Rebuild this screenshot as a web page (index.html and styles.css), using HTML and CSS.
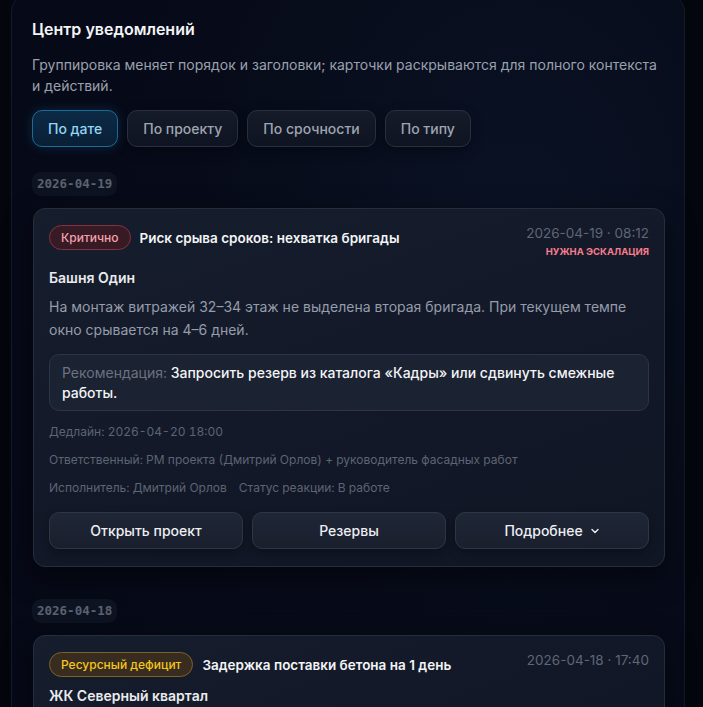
FILE: index.html
```html
<!DOCTYPE html>
<html lang="ru">
<head>
<meta charset="utf-8">
<title>Центр уведомлений</title>
<link rel="stylesheet" href="styles.css">
</head>
<body>
<section class="panel">
  <h1 class="title">Центр уведомлений</h1>
  <p class="subtitle">Группировка меняет порядок и заголовки; карточки раскрываются для полного контекста и действий.</p>
  <div class="filters">
    <button class="filter active">По дате</button>
    <button class="filter">По проекту</button>
    <button class="filter">По срочности</button>
    <button class="filter">По типу</button>
  </div>

  <div class="group">
    <span class="date-chip">2026-04-19</span>
    <article class="card">
      <header class="card-head">
        <div class="head-left">
          <span class="badge badge-critical">Критично</span>
          <span class="card-title">Риск срыва сроков: нехватка бригады</span>
        </div>
        <div class="head-right">
          <span class="time">2026-04-19 · 08:12</span>
          <span class="escalate">Нужна эскалация</span>
        </div>
      </header>
      <div class="project">Башня Один</div>
      <p class="desc">На монтаж витражей 32–34 этаж не выделена вторая бригада. При текущем темпе окно срывается на 4–6 дней.</p>
      <p class="reco"><span class="reco-label">Рекомендация:</span> Запросить резерв из каталога «Кадры» или сдвинуть смежные работы.</p>
      <div class="meta">Дедлайн: 2026-04-20 18:00</div>
      <div class="meta">Ответственный: PM проекта (Дмитрий Орлов) + руководитель фасадных работ</div>
      <div class="meta meta-row"><span>Исполнитель: Дмитрий Орлов</span><span>Статус реакции: В работе</span></div>
      <div class="actions">
        <button class="action">Открыть проект</button>
        <button class="action">Резервы</button>
        <button class="action">Подробнее
          <svg class="chev" width="10" height="10" viewBox="0 0 10 10"><path d="M2 3.5 L5 6.5 L8 3.5" fill="none" stroke="currentColor" stroke-width="1.4" stroke-linecap="round" stroke-linejoin="round"/></svg>
        </button>
      </div>
    </article>
  </div>

  <div class="group">
    <span class="date-chip">2026-04-18</span>
    <article class="card">
      <header class="card-head">
        <div class="head-left">
          <span class="badge badge-resource">Ресурсный дефицит</span>
          <span class="card-title">Задержка поставки бетона на 1 день</span>
        </div>
        <div class="head-right">
          <span class="time">2026-04-18 · 17:40</span>
        </div>
      </header>
      <div class="project">ЖК Северный квартал</div>
      <p class="desc">Поставщик перенёс отгрузку бетона М350 на следующий день. Заливка перекрытия 12 этажа смещается.</p>
    </article>
  </div>
</section>
</body>
</html>
```

FILE: styles.css
```css
* { box-sizing: border-box; }
html, body { margin: 0; padding: 0; }
body {
  background: #04060d;
  font-family: Inter, "Noto Sans", sans-serif;
  color: #e5e7eb;
  height: 707px;
  overflow: hidden;
}
.panel {
  margin: -5px 0 0 11px;
  width: 674px;
  min-height: 900px;
  padding: 21px 19px 20px 20px;
  border: 1px solid #141a28;
  border-radius: 16px;
  background: radial-gradient(ellipse at 75% 25%, #0a1224 0%, #070b19 45%, #050815 100%);
}
.title {
  margin: 0;
  font-size: 16px;
  line-height: 24px;
  font-weight: 600;
  color: #f3f4f6;
}
.subtitle {
  margin: 13px 0 0;
  font-size: 14px;
  line-height: 21px;
  color: #9aa1ad;
}
.filters {
  display: flex;
  gap: 9px;
  margin-top: 14px;
}
.filter {
  font-family: inherit;
  font-size: 14px;
  font-weight: 500;
  height: 37px;
  padding: 0 15px;
  border-radius: 10px;
  border: 1px solid #283041;
  background: linear-gradient(#151b29, #0f1422);
  color: #9ea5b1;
  box-shadow: 0 4px 12px rgba(0,0,0,0.35);
}
.filter.active {
  background: linear-gradient(#0c2a45, #092036);
  border-color: #1b6c98;
  color: #93d5f6;
  box-shadow: 0 0 12px rgba(30,120,180,0.25);
}
.group {
  display: flex;
  flex-direction: column;
  align-items: flex-start;
  margin-top: 25px;
}
.group + .group { margin-top: 32px; }
.date-chip {
  font-family: "DejaVu Sans Mono", monospace;
  font-size: 12.5px;
  font-weight: 700;
  line-height: 24px;
  height: 24px;
  padding: 0 5px;
  border-radius: 9px;
  background: #0e1322;
  color: #5b6271;
}
.card {
  align-self: stretch;
  margin: 12px 0 0 1px;
  padding: 16px 15px 17px;
  border: 1px solid #262d3c;
  border-radius: 12px;
  background: linear-gradient(160deg, #161d2c 0%, #121827 60%, #111625 100%);
  box-shadow: 0 10px 28px rgba(0,0,0,0.5);
}
.card-head {
  display: flex;
  justify-content: space-between;
  align-items: flex-start;
}
.head-left {
  display: flex;
  align-items: center;
  gap: 9px;
}
.badge {
  display: inline-block;
  height: 25px;
  line-height: 23px;
  padding: 0 11px;
  border-radius: 13px;
  font-size: 12px;
  font-weight: 500;
  border: 1px solid;
}
.badge-critical {
  background: #381a24;
  border-color: #843140;
  color: #f3a2ad;
}
.badge-resource {
  background: #372c1f;
  border-color: #7e6129;
  color: #f6c61c;
}
.card-title {
  font-size: 13.5px;
  font-weight: 600;
  color: #f3f4f6;
}
.head-right {
  display: flex;
  flex-direction: column;
  align-items: flex-end;
}
.time {
  font-size: 13.5px;
  line-height: 17px;
  color: #5f6675;
}
.escalate {
  margin-top: 3px;
  font-size: 9.5px;
  line-height: 14px;
  font-weight: 700;
  text-transform: uppercase;
  color: #f77c8c;
}
.project {
  margin-top: 9px;
  font-size: 14px;
  line-height: 20px;
  font-weight: 600;
  color: #e8eaee;
}
.desc {
  margin: 7px 0 0;
  font-size: 14px;
  line-height: 23px;
  color: #959cab;
}
.reco {
  margin: 13px 0 0;
  padding: 8px 12px;
  border: 1px solid #2c3445;
  border-radius: 10px;
  background: #1b2232;
  font-size: 14px;
  line-height: 19.5px;
  font-weight: 500;
  color: #f3f4f6;
}
.reco-label {
  font-weight: 400;
  color: #6b7280;
}
.meta {
  margin-top: 10px;
  font-size: 12px;
  line-height: 18px;
  color: #5d6473;
  font-variant-numeric: tabular-nums;
}
.reco + .meta { margin-top: 12px; }
.meta-row {
  display: flex;
  gap: 12px;
}
.actions {
  display: grid;
  grid-template-columns: 1fr 1fr 1fr;
  gap: 9px;
  margin-top: 15px;
}
.action {
  font-family: inherit;
  height: 37px;
  border-radius: 10px;
  border: 1px solid #2e3646;
  background: linear-gradient(#1f2636, #191f2d);
  color: #eceef2;
  font-size: 14px;
  font-weight: 500;
  display: flex;
  align-items: center;
  justify-content: center;
  gap: 7px;
  box-shadow: 0 4px 10px rgba(0,0,0,0.3);
}
.chev { display: block; }
```
